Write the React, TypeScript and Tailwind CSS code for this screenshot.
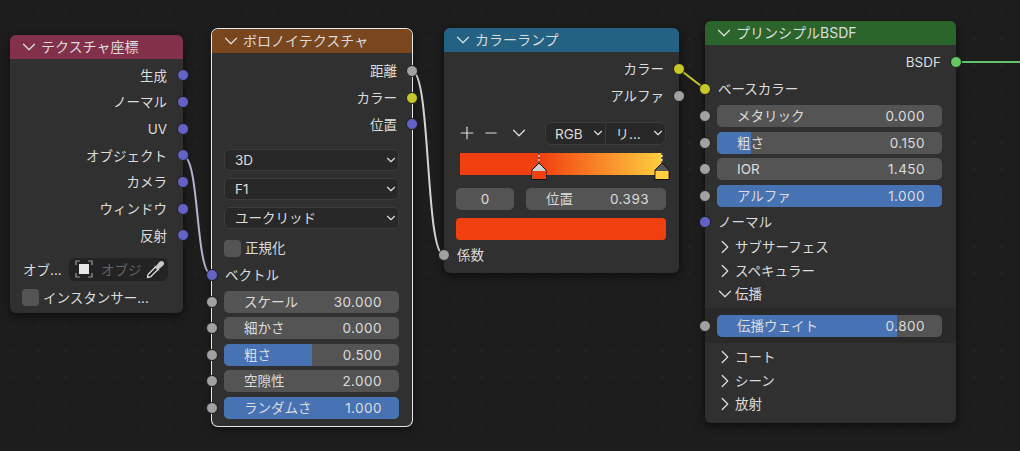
import { ChevronDown, ChevronRight, Minus, Plus } from "lucide-react"
import { ReactNode } from "react"

const PURPLE = "bg-[#6363c7]"
const GREY = "bg-[#a1a1a1]"
const YELLOW = "bg-[#c7c729]"
const GREEN = "bg-[#63c763]"

// CJK glyphs sit a touch high with leading-none
const Label = ({ children }: { children: ReactNode }) => <span className="relative top-[1px]">{children}</span>

const Socket = ({ color, side }: { color: string; side: "left" | "right" }) => (
    <span
        className={`absolute top-1/2 -translate-y-1/2 w-[12px] h-[12px] rounded-full border border-[#1d1d1d] ${color} ${side === "left" ? "left-0 -translate-x-1/2" : "right-0 translate-x-1/2"}`}
    />
)

const Node = ({ className, title, color, children }: { className: string; title: string; color: string; children: ReactNode }) => (
    <div className={`absolute flex flex-col rounded-[6px] bg-[#303030] shadow-[0_3px_10px_rgba(0,0,0,0.55)] ${className}`}>
        <div className={`flex items-center h-[24px] shrink-0 pl-[8px] gap-[1px] rounded-t-[6px] text-[14px] text-[#dcdcdc] ${color}`}>
            <ChevronDown size={22} strokeWidth={1.4} />
            <span>{title}</span>
        </div>
        {children}
    </div>
)

const Output = ({ label, color, h = "h-[26.7px]", pr = "pr-[15px]" }: { label: string; color: string; h?: string; pr?: string }) => (
    <div className={`relative flex items-center justify-end ${h} ${pr}`}>
        <Label>{label}</Label>
        <Socket color={color} side="right" />
    </div>
)

const Input = ({ label, color, className = "" }: { label: string; color: string; className?: string }) => (
    <div className={`relative flex items-center h-[27px] pl-[13px] ${className}`}>
        <Label>{label}</Label>
        <Socket color={color} side="left" />
    </div>
)

const Field = ({ label, value, fill = 0 }: { label: string; value: string; fill?: number }) => (
    <div className="relative flex items-center justify-between h-[22px] pl-[20px] pr-[17px] rounded-[5px] bg-[#545454] overflow-hidden">
        <div className="absolute inset-y-0 left-0 bg-[#4772b3]" style={{ width: `${fill * 100}%` }} />
        <Label>{label}</Label>
        <span className="relative top-[1px] tracking-[0.45px]">{value}</span>
    </div>
)

// field with its input socket sitting on the node edge
const FieldRow = ({ label, value, fill, ml, mr }: { label: string; value: string; fill?: number; ml: string; mr: string }) => (
    <div className={`relative ${mr}`}>
        <Socket color={GREY} side="left" />
        <div className={ml}>
            <Field label={label} value={value} fill={fill} />
        </div>
    </div>
)

const Select = ({ label }: { label: string }) => (
    <div className="flex items-center justify-between h-[22px] pl-[10px] rounded-[5px] bg-[#282828] border border-[#3c3c3c]">
        <Label>{label}</Label>
        <ChevronDown size={14} strokeWidth={2} />
    </div>
)

const Checkbox = ({ label, className = "" }: { label: string; className?: string }) => (
    <div className={`flex items-center gap-[4px] h-[17px] ${className}`}>
        <span className="w-[17px] h-[17px] rounded-[4px] bg-[#545454]" />
        <Label>{label}</Label>
    </div>
)

const Panel = ({ label, open = false }: { label: string; open?: boolean }) => (
    <div className="flex items-center h-[23.5px] pl-[9px]">
        {open ? (
            <ChevronDown size={22} strokeWidth={1.4} className="-mr-[1px]" />
        ) : (
            <ChevronRight size={22} strokeWidth={1.4} className="-mr-[1px]" />
        )}
        <Label>{label}</Label>
    </div>
)

const ObjectIcon = () => (
    <svg width="18" height="18" viewBox="0 0 18 18" fill="none" stroke="#9a9a9a" strokeWidth="1.2" className="shrink-0">
        <path d="M1 5V1H5M13 1H17V5M17 13V17H13M5 17H1V13" />
        <rect x="4" y="4" width="10" height="10" fill="#e8e8e8" stroke="none" />
    </svg>
)

const Eyedropper = () => (
    <svg width="19" height="19" viewBox="0 0 19 19" fill="none" className="shrink-0 ml-auto">
        <path d="M1.5 17.5L2 14.5L9.5 7L12 9.5L4.5 17Z" stroke="#e0e0e0" strokeWidth="1.3" />
        <path d="M8 5.5L10 6L13.5 1.8C14.8 .6 16.4 .8 17.4 1.8C18.4 3 18.4 4.4 17.2 5.6L13 9L13.5 11Z" fill="#c8c8c8" />
    </svg>
)

const RampMarker = ({ left, tip, fill }: { left: string; tip: string; fill: string }) => (
    <svg className={`absolute top-0 ${left}`} width="16" height="28" viewBox="0 0 16 28">
        <path d="M8 0V10" stroke="#fff" strokeWidth="1" />
        <path d="M8 0V10" stroke="#000" strokeWidth="1" strokeDasharray="2 2" />
        <path d="M8 10L15 17V26.5H1V17Z" fill={tip} stroke="#111" strokeWidth="1" />
        <rect x="1.5" y="18" width="13" height="8" fill={fill} />
    </svg>
)

export default function App() {
    return (
        <div className="relative w-[1020px] h-[451px] overflow-hidden bg-[#1d1d1d] bg-[radial-gradient(#242424_1px,transparent_1px)] bg-[size:26px_26px] text-[13.5px] leading-none text-[#dcdcdc] font-['Inter','Noto_Sans_CJK_JP',sans-serif]">
            <svg className="absolute inset-0" width="1020" height="451" fill="none" strokeLinecap="round">
                <path d="M183 156C200 156 195 275 212 275" stroke="#b6b4d6" strokeWidth="2" />
                <path d="M412 71C431 71 425 255 444 255" stroke="#d4d4d4" strokeWidth="2" />
                <path d="M679 69L705 89" stroke="#c7c729" strokeWidth="2" />
                <path d="M956 62H1020" stroke="#5fc46c" strokeWidth="2" />
            </svg>

            {/* テクスチャ座標 */}
            <Node className="left-[10px] top-[35px] w-[173px] h-[278px]" title="テクスチャ座標" color="bg-[#83314a]">
                <div className="pt-[3px]">
                    <Output label="生成" color={PURPLE} pr="pr-[16px]" />
                    <Output label="ノーマル" color={PURPLE} pr="pr-[16px]" />
                    <Output label="UV" color={PURPLE} pr="pr-[16px]" />
                    <Output label="オブジェクト" color={PURPLE} pr="pr-[16px]" />
                    <Output label="カメラ" color={PURPLE} pr="pr-[16px]" />
                    <Output label="ウィンドウ" color={PURPLE} pr="pr-[16px]" />
                    <Output label="反射" color={PURPLE} pr="pr-[16px]" />
                </div>
                <div className="flex items-center mt-[9px] pl-[13px] pr-[15px] h-[23px]">
                    <Label>
                        <span className="inline-block w-[46px]">オブ...</span>
                    </Label>
                    <div className="flex flex-1 items-center h-[23px] pl-[6px] pr-[3px] rounded-[6px] bg-[#232323]">
                        <ObjectIcon />
                        <span className="relative top-[1px] ml-[8px] whitespace-nowrap text-[#646464]">オブジ</span>
                        <Eyedropper />
                    </div>
                </div>
                <Checkbox className="mt-[8px] pl-[12px]" label="インスタンサー..." />
            </Node>

            {/* ボロノイテクスチャ */}
            <Node className="left-[212px] top-[29px] w-[200px] h-[397px] ring-1 ring-[#e8e8e8]" title="ボロノイテクスチャ" color="bg-[#79461d]">
                <div className="pt-[4.6px]">
                    <Output label="距離" color={GREY} />
                    <Output label="カラー" color={YELLOW} />
                    <Output label="位置" color={PURPLE} />
                </div>
                <div className="flex flex-col gap-[7px] mt-[11px] ml-[12px] mr-[13px]">
                    <Select label="3D" />
                    <Select label="F1" />
                    <Select label="ユークリッド" />
                </div>
                <Checkbox className="mt-[11px] ml-[12px]" label="正規化" />
                <Input className="mt-[4.5px]" label="ベクトル" color={PURPLE} />
                <div className="flex flex-col gap-[4.5px] mt-[2.5px]">
                    <FieldRow ml="ml-[12px]" mr="mr-[13px]" label="スケール" value="30.000" />
                    <FieldRow ml="ml-[12px]" mr="mr-[13px]" label="細かさ" value="0.000" />
                    <FieldRow ml="ml-[12px]" mr="mr-[13px]" label="粗さ" value="0.500" fill={0.5} />
                    <FieldRow ml="ml-[12px]" mr="mr-[13px]" label="空隙性" value="2.000" />
                    <FieldRow ml="ml-[12px]" mr="mr-[13px]" label="ランダムさ" value="1.000" fill={1} />
                </div>
            </Node>

            {/* カラーランプ */}
            <Node className="left-[444px] top-[28px] w-[235px] h-[245px]" title="カラーランプ" color="bg-[#246283]">
                <div className="pt-[3.6px]">
                    <Output label="カラー" color={YELLOW} />
                    <Output label="アルファ" color={GREY} />
                </div>
                <div className="flex items-center justify-between mt-[13px] ml-[13px] mr-[13px] h-[23px]">
                    <div className="flex items-center">
                        <Plus size={20} strokeWidth={1.4} />
                        <Minus size={18} strokeWidth={1.4} className="ml-[5px]" />
                        <ChevronDown size={22} strokeWidth={1.4} className="ml-[8px]" />
                    </div>
                    <div className="flex w-[121px] h-[23px] rounded-[6px] bg-[#282828] border border-[#3c3c3c]">
                        <div className="flex flex-1 items-center justify-between pl-[9px] border-r border-[#3c3c3c]">
                            <Label>RGB</Label>
                            <ChevronDown size={14} strokeWidth={2} />
                        </div>
                        <div className="flex flex-1 items-center justify-between pl-[10px]">
                            <Label>リ...</Label>
                            <ChevronDown size={14} strokeWidth={2} />
                        </div>
                    </div>
                </div>
                <div className="relative mt-[8px] ml-[16px] mr-[17px] h-[22px] bg-[linear-gradient(90deg,#f23f10_0%,#f23f10_39.3%,#ffcf40_100%)]">
                    <RampMarker left="left-[71px]" tip="#d0d0d0" fill="#f23f10" />
                    <RampMarker left="left-[194px]" tip="#555555" fill="#ffcf40" />
                </div>
                <div className="flex gap-[12px] mt-[13px] ml-[12px] mr-[13px]">
                    <div className="flex items-center justify-center w-[58px] h-[22px] rounded-[5px] bg-[#545454]">
                        <Label>0</Label>
                    </div>
                    <div className="flex-1">
                        <Field label="位置" value="0.393" />
                    </div>
                </div>
                <div className="mt-[8px] ml-[12px] mr-[13px] h-[22px] rounded-[4px] bg-[#f23f10]" />
                <Input className="mt-[1.5px]" label="係数" color={GREY} />
            </Node>

            {/* プリンシプルBSDF */}
            <Node className="left-[705px] top-[21px] w-[251px] h-[402px]" title="プリンシプルBSDF" color="bg-[#2b652b]">
                <div className="pt-[3.5px]">
                    <Output label="BSDF" color={GREEN} h="h-[27px]" />
                </div>
                <Input label="ベースカラー" color={YELLOW} />
                <div className="flex flex-col gap-[4.6px] mt-[2.5px]">
                    <FieldRow ml="ml-[12px]" mr="mr-[14px]" label="メタリック" value="0.000" />
                    <FieldRow ml="ml-[12px]" mr="mr-[14px]" label="粗さ" value="0.150" fill={0.15} />
                    <FieldRow ml="ml-[12px]" mr="mr-[14px]" label="IOR" value="1.450" />
                    <FieldRow ml="ml-[12px]" mr="mr-[14px]" label="アルファ" value="1.000" fill={1} />
                </div>
                <Input className="mt-[1.5px]" label="ノーマル" color={PURPLE} />
                <Panel label="サブサーフェス" />
                <Panel label="スペキュラー" />
                <Panel label="伝播" open />
                <div className="flex flex-col justify-center mt-[2.5px] h-[35px] bg-[#292929]">
                    <FieldRow ml="ml-[12px]" mr="mr-[14px]" label="伝播ウェイト" value="0.800" fill={0.8} />
                </div>
                <div className="mt-[2px]">
                    <Panel label="コート" />
                    <Panel label="シーン" />
                    <Panel label="放射" />
                </div>
            </Node>
        </div>
    )
}
